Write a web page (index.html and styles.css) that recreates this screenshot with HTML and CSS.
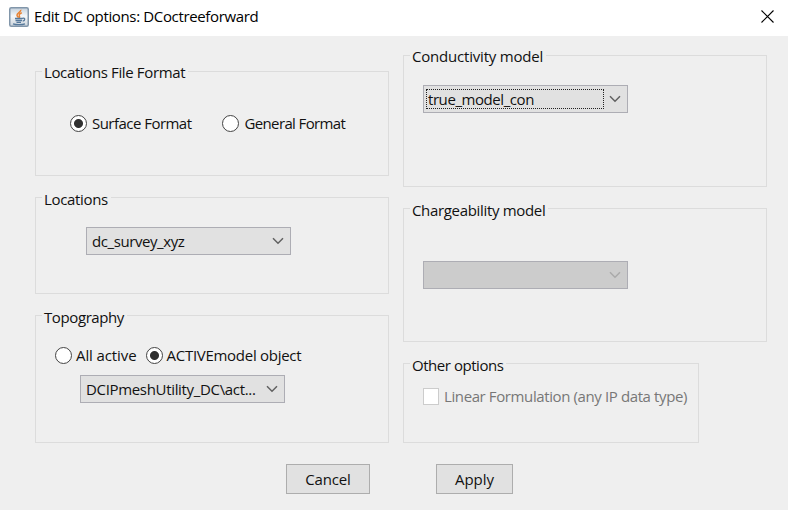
FILE: index.html
```html
<!DOCTYPE html>
<html lang="en">
<head>
<meta charset="utf-8">
<title>Edit DC options: DCoctreeforward</title>
<link rel="stylesheet" href="styles.css">
</head>
<body>
<header class="titlebar">
  <svg class="app-icon" width="20" height="20" viewBox="0 0 20 20">
    <defs><linearGradient id="tile" x1="0" y1="0" x2="0" y2="1"><stop offset="0" stop-color="#c3d0dc"/><stop offset=".45" stop-color="#f5f7f9"/><stop offset="1" stop-color="#cbd4dc"/></linearGradient></defs>
    <rect x=".75" y=".75" width="18.5" height="18.5" rx="1.5" fill="url(#tile)" stroke="#8196aa" stroke-width="1.5"/>
    <path d="M11.8 2.8C12.4 5.2 7.5 6 8 8.3c.2 1 1 1.500 1.500 2.300M12.800 5.800c-1.800.8-3.200 1.700-2.500 2.900.6 1 .5 1.600-.2 2.300" fill="none" stroke="#e88232" stroke-width="1.500"/>
    <path d="M6 11.500h7.500M6.500 13.500h6.500M7.500 15.300h4.500M13.500 11.300c3-.8 2.800 2.300.2 2.900M4 16.800c3 1.100 9 1.100 12 0" fill="none" stroke="#56799b" stroke-width="1.300"/>
  </svg>
  <h1 class="title">Edit DC options: DCoctreeforward</h1>
  <svg class="close" width="13" height="13" viewBox="0 0 13 13"><path d="M.5.5l12 12M12.500.5l-12 12" stroke="#000" stroke-width="1.100"/></svg>
</header>
<main class="columns">
  <div class="col col-left">
    <section class="panel format">
      <h2 class="legend w-format">Locations File Format</h2>
      <div class="radios">
        <label class="choice"><span class="radio on"></span><span class="w-surface">Surface Format</span></label>
        <label class="choice"><span class="radio"></span><span class="w-general">General Format</span></label>
      </div>
    </section>
    <section class="panel locations">
      <h2 class="legend w-loc">Locations</h2>
      <div class="combo"><span class="value w-survey">dc_survey_xyz</span><svg class="arrow" width="12" height="8" viewBox="0 0 12 8"><path d="M1 1.300l5 5 5-5"/></svg></div>
    </section>
    <section class="panel topo">
      <h2 class="legend w-topo">Topography</h2>
      <div class="radios">
        <label class="choice"><span class="radio"></span><span class="w-all">All active</span></label>
        <label class="choice"><span class="radio on"></span><span class="w-active">ACTIVEmodel object</span></label>
      </div>
      <div class="combo"><span class="value w-mesh">DCIPmeshUtility_DC\act...</span><svg class="arrow" width="12" height="8" viewBox="0 0 12 8"><path d="M1 1.300l5 5 5-5"/></svg></div>
    </section>
  </div>
  <div class="col col-right">
    <section class="panel conduct">
      <h2 class="legend w-cond">Conductivity model</h2>
      <div class="combo focused"><span class="value w-true">true_model_con</span><svg class="arrow" width="12" height="8" viewBox="0 0 12 8"><path d="M1 1.300l5 5 5-5"/></svg></div>
    </section>
    <section class="panel charge">
      <h2 class="legend w-charge">Chargeability model</h2>
      <div class="combo disabled"><span class="value"></span><svg class="arrow" width="12" height="8" viewBox="0 0 12 8"><path d="M1 1.300l5 5 5-5"/></svg></div>
    </section>
    <section class="panel other">
      <h2 class="legend w-other">Other options</h2>
      <label class="check"><span class="box"></span><span class="w-linear">Linear Formulation (any IP data type)</span></label>
    </section>
  </div>
</main>
<footer class="actions">
  <button class="btn cancel"><span class="w-cancel">Cancel</span></button>
  <button class="btn apply"><span class="w-apply">Apply</span></button>
</footer>
</body>
</html>
```
FILE: styles.css
```css
* { box-sizing: border-box; }
body {
  margin: 0;
  width: 788px;
  height: 510px;
  overflow: hidden;
  background: #efefef;
  color: #111;
  font: 15px/20px "Open Sans", "Noto Sans", sans-serif;
  white-space: nowrap;
}
h1, h2 { margin: 0; font: inherit; }

.titlebar { display: flex; align-items: center; height: 36px; padding: 0 14px 3px 9px; background: #fff; }
.title { margin: -1px 0 0 5px; color: #000; letter-spacing: -.355px; }
.close { margin-left: auto; }

.columns { display: flex; gap: 14px; height: 408px; padding-left: 35px; }
.col { display: flex; flex-direction: column; }
.col-left { width: 354px; padding-top: 35px; gap: 21px; }
.col-right { width: 364px; padding-top: 19px; gap: 21px; }
.panel { display: flex; flex-direction: column; align-items: flex-start; border: 1px solid #dcdcdc; }
.legend { height: 20px; margin: -9px 0 0 6px; padding: 0 3px 0 2px; background: #efefef; }
.format .legend, .conduct .legend { margin: -10px 0 1px 6px; }
.format { height: 105px; }
.locations { height: 97px; }
.topo { height: 128px; }
.conduct { height: 132px; }
.charge { height: 134px; }
.other { width: 296px; height: 80px; }

.radios { display: flex; }
.choice { display: flex; align-items: center; gap: 5px; }
.radio { width: 17px; height: 17px; border: 1.5px solid #444; border-radius: 50%; background: #fff; }
.radio.on { background: radial-gradient(circle, #303030 0 4px, #fff 5px); }
.format .radios { margin: 30px 0 0 34px; gap: 31px; }
.topo .radios { margin: 18px 0 0 19px; gap: 9px; }
.topo .choice { gap: 4px; }

.combo { display: flex; align-items: center; width: 205px; height: 28px; padding: 0 6px 0 2px; border: 1px solid #adadb4; background: #e1e1e1; }
.value { flex: 1; margin-right: 5px; padding-left: 3px; line-height: 20px; height: 20px; }
.arrow { fill: none; stroke: #606060; stroke-width: 1.5; flex: none; }
.focused .value { padding-left: 1px; border: 1px dotted #222; line-height: 18px; }
.disabled { background: #ccc; }
.disabled .arrow { stroke: #aaa; }
.locations .combo { margin: 18px 0 0 50px; }
.topo .combo { margin: 10px 0 0 44px; }
.conduct .combo { margin: 18px 0 0 19px; }
.charge .combo { margin: 41px 0 0 19px; }

.check { display: flex; align-items: center; gap: 5px; margin: 11px 0 0 19px; color: #777; }
.box { width: 16px; height: 17px; border: 1px solid #ccc; background: #fff; }

.actions { display: flex; gap: 66px; padding: 20px 0 0 286px; }
.btn { height: 30px; padding: 0; border: 1px solid #adadad; background: #e1e1e1; color: #111; font: inherit; }
.cancel { width: 84px; }
.apply { width: 77px; }

/* Per-label tracking */
.w-format { letter-spacing: -.37px; }
.w-surface { letter-spacing: -.53px; }
.w-general { letter-spacing: -.63px; }
.w-loc { letter-spacing: -.33px; }
.w-survey { letter-spacing: -.42px; }
.w-topo { letter-spacing: -.4px; }
.w-all { letter-spacing: -.1px; }
.w-active { letter-spacing: -.28px; }
.w-mesh { letter-spacing: -.33px; }
.w-cond { letter-spacing: -.2px; }
.w-charge { letter-spacing: -.33px; }
.w-other { letter-spacing: -.46px; }
.w-linear { letter-spacing: -.39px; }
.w-true { letter-spacing: -.43px; }
.w-cancel { letter-spacing: -.15px; }
```
